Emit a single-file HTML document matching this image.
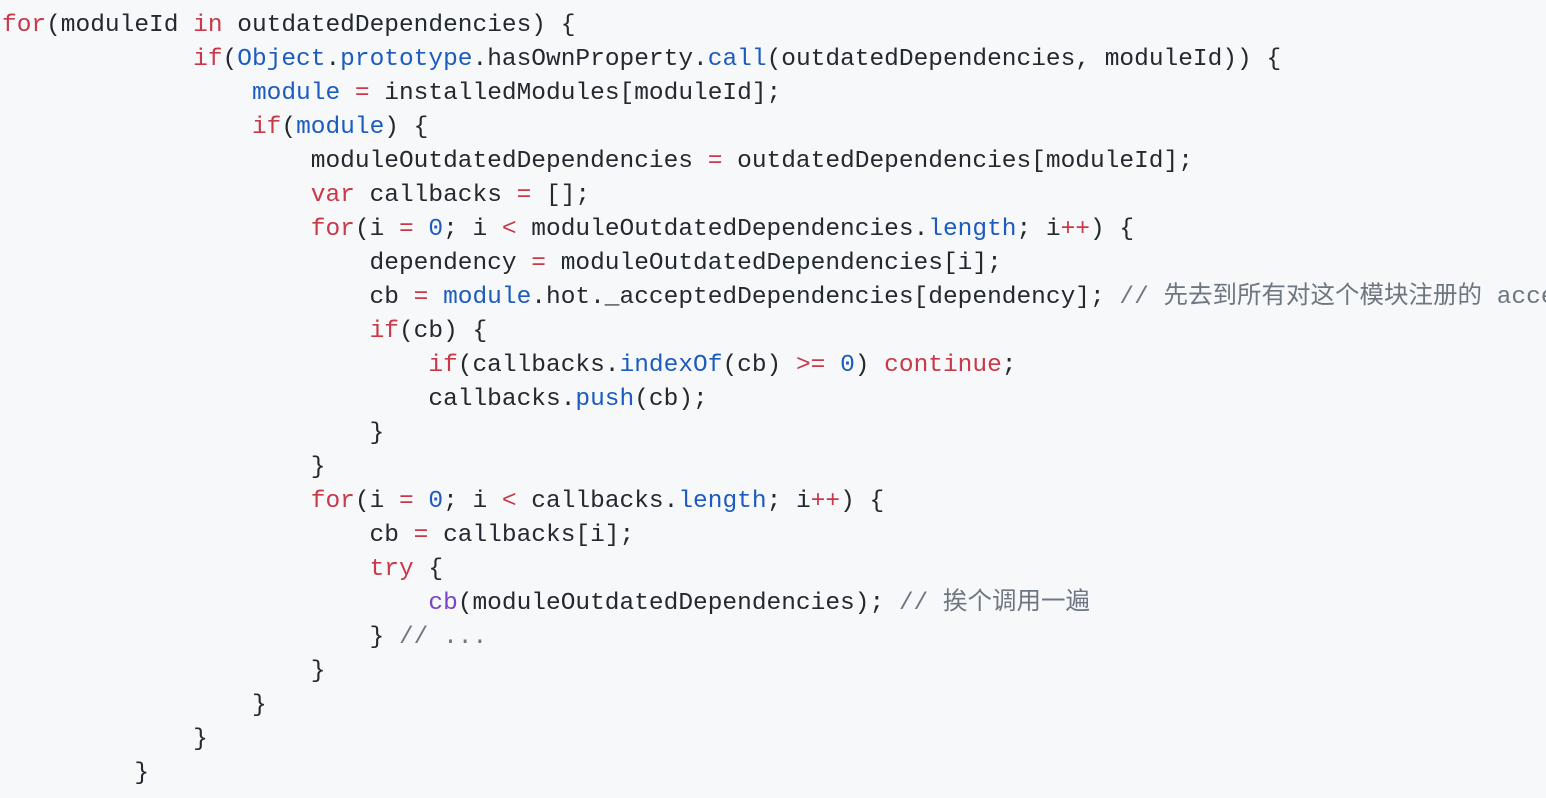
<!DOCTYPE html>
<html><head><meta charset="utf-8"><style>
html,body{margin:0;padding:0;background:#f6f8fa;width:1546px;height:798px;overflow:hidden}
pre{margin:0;padding:9px 0 0 2px;font-family:"Liberation Mono","Noto Sans CJK SC",monospace;font-size:24.5px;line-height:34px;color:#24292f;white-space:pre}
.k{color:#c9394a}.b{color:#1d5bbf}.c{color:#6e7781}.p{color:#7a45c9}
</style></head><body><pre><span class="k">for</span>(moduleId <span class="k">in</span> outdatedDependencies) {
             <span class="k">if</span>(<span class="b">Object</span>.<span class="b">prototype</span>.hasOwnProperty.<span class="b">call</span>(outdatedDependencies, moduleId)) {
                 <span class="b">module</span> <span class="k">=</span> installedModules[moduleId];
                 <span class="k">if</span>(<span class="b">module</span>) {
                     moduleOutdatedDependencies <span class="k">=</span> outdatedDependencies[moduleId];
                     <span class="k">var</span> callbacks <span class="k">=</span> [];
                     <span class="k">for</span>(i <span class="k">=</span> <span class="b">0</span>; i <span class="k">&lt;</span> moduleOutdatedDependencies.<span class="b">length</span>; i<span class="k">++</span>) {
                         dependency <span class="k">=</span> moduleOutdatedDependencies[i];
                         cb <span class="k">=</span> <span class="b">module</span>.hot._acceptedDependencies[dependency]; <span class="c">// 先去到所有对这个模块注册的 accept</span>
                         <span class="k">if</span>(cb) {
                             <span class="k">if</span>(callbacks.<span class="b">indexOf</span>(cb) <span class="k">&gt;=</span> <span class="b">0</span>) <span class="k">continue</span>;
                             callbacks.<span class="b">push</span>(cb);
                         }
                     }
                     <span class="k">for</span>(i <span class="k">=</span> <span class="b">0</span>; i <span class="k">&lt;</span> callbacks.<span class="b">length</span>; i<span class="k">++</span>) {
                         cb <span class="k">=</span> callbacks[i];
                         <span class="k">try</span> {
                             <span class="p">cb</span>(moduleOutdatedDependencies); <span class="c">// 挨个调用一遍</span>
                         } <span class="c">// ...</span>
                     }
                 }
             }
         }</pre></body></html>
